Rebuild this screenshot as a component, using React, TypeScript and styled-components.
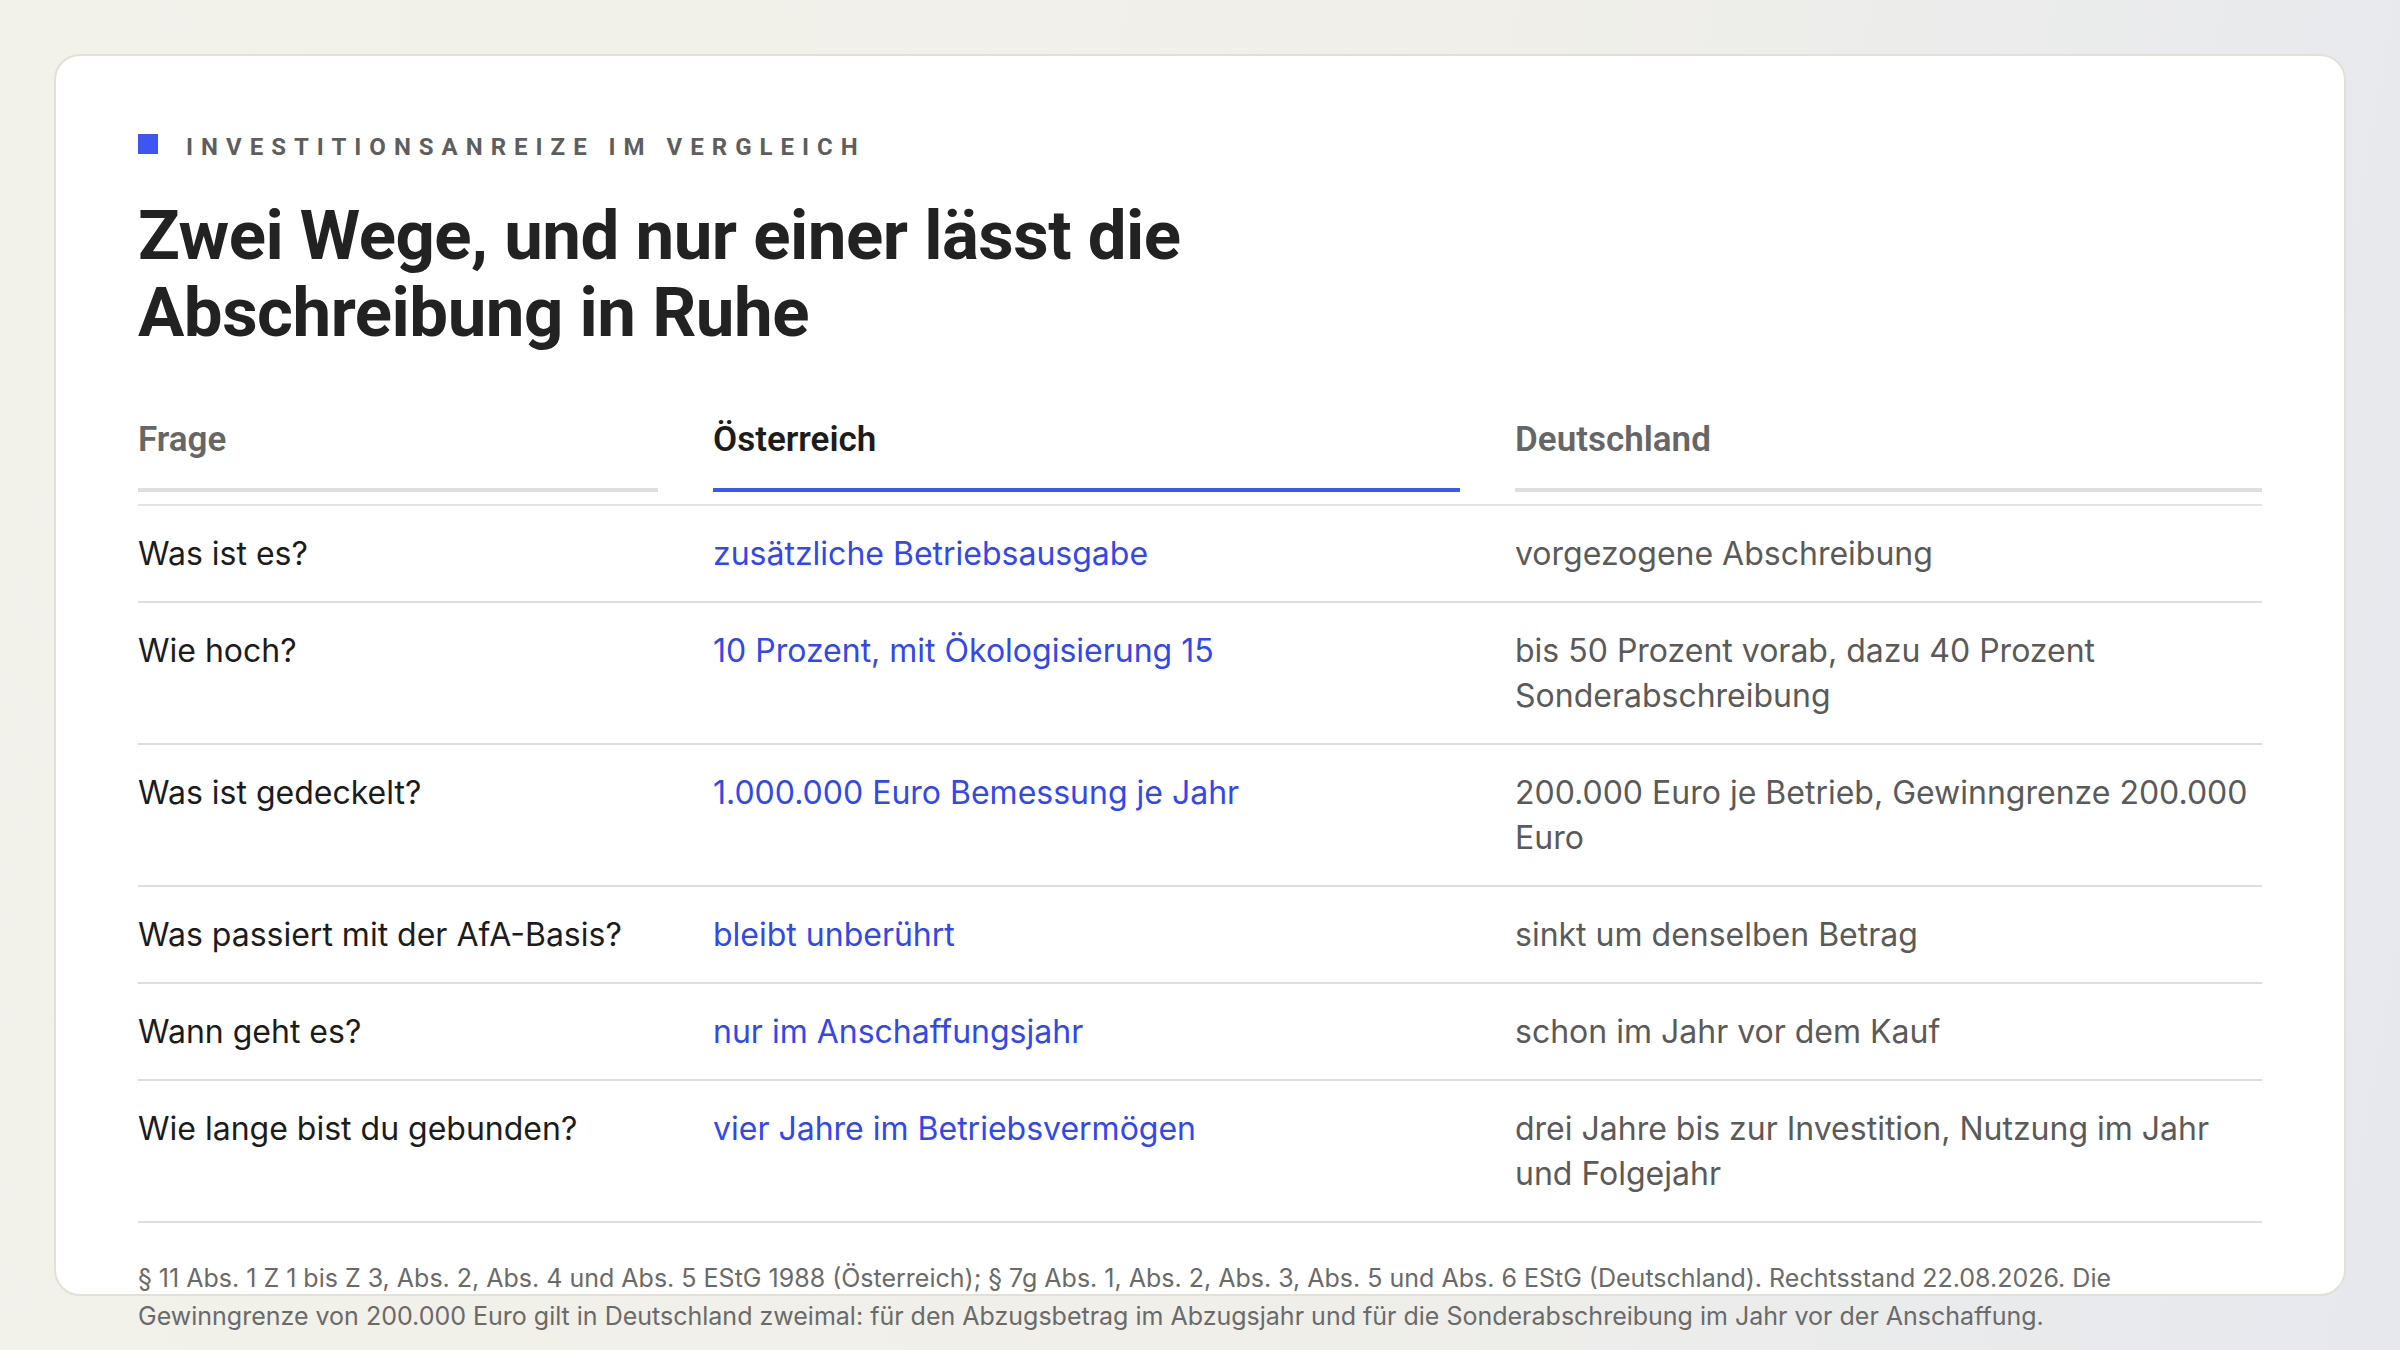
import React from "react";
import styled, { createGlobalStyle } from "styled-components";

const Global = createGlobalStyle`
  html, body { margin: 0; padding: 0; }
  body {
    width: 2400px; height: 1350px; overflow: hidden;
    background: linear-gradient(100deg, #f2f1ea 0%, #f0efe9 55%, #e6e8ee 100%);
    font-family: "Inter", "Noto Sans", sans-serif;
  }
`;

const Page = styled.div`
  padding: 54px;
  box-sizing: border-box;
`;

const Card = styled.div`
  height: 1242px;
  background: #fff;
  border: 2px solid #e3e1d6;
  border-radius: 26px;
  box-sizing: border-box;
  padding: 77px 82px 0 82px;
  overflow: visible;
`;

const Eyebrow = styled.div`
  display: flex;
  align-items: center;
  gap: 28px;
  font-family: "Roboto", sans-serif;
  font-weight: 700;
  font-size: 24px;
  letter-spacing: 8px;
  color: #5e5e5e;
  text-transform: uppercase;
`;

const Square = styled.span`
  width: 20px; height: 20px; background: #3d55f5; display: inline-block;
  margin-top: -6px;
`;

const Title = styled.h1`
  margin: 36px 0 0 0;
  font-family: "Roboto", sans-serif;
  font-weight: 700;
  font-size: 69px;
  line-height: 77px;
  letter-spacing: -0.5px;
  color: #222;
  width: 1250px;
`;

const Table = styled.div`
  margin-top: 68px;
  display: grid;
  grid-template-columns: 520px 747px 747px;
  column-gap: 55px;
  width: 2124px;
`;

const Head = styled.div<{ $active?: boolean }>`
  font-family: "Roboto", sans-serif;
  font-weight: 600;
  font-size: 35px;
  color: ${p => (p.$active ? "#1c1c1c" : "#666")};
  padding-bottom: 28px;
  border-bottom: 4px solid ${p => (p.$active ? "#3d55f5" : "#dedede")};
`;

const HeadRule = styled.div`
  grid-column: 1 / -1;
  height: 2px;
  background: #e4e4e4;
  margin-top: 12px;
`;

const Row = styled.div`
  grid-column: 1 / -1;
  display: grid;
  grid-template-columns: 520px 747px 747px;
  column-gap: 55px;
  padding: 25px 0 25px;
  border-bottom: 2px solid #dedede;
  font-size: 32px;
  line-height: 45px;
`;

const Cell = styled.div<{ $tone: "q" | "at" | "de" }>`
  color: ${p => (p.$tone === "q" ? "#1c1c1c" : p.$tone === "at" ? "#3248ea" : "#5a5a5a")};
`;

const Note = styled.p`
  margin: 36px 0 0 0;
  font-size: 25px;
  line-height: 38px;
  color: #6a6a6a;
  width: 2124px;
`;

const rows: [string, string, string][] = [
  ["Was ist es?", "zusätzliche Betriebsausgabe", "vorgezogene Abschreibung"],
  ["Wie hoch?", "10 Prozent, mit Ökologisierung 15", "bis 50 Prozent vorab, dazu 40 Prozent Sonderabschreibung"],
  ["Was ist gedeckelt?", "1.000.000 Euro Bemessung je Jahr", "200.000 Euro je Betrieb, Gewinngrenze 200.000 Euro"],
  ["Was passiert mit der AfA-Basis?", "bleibt unberührt", "sinkt um denselben Betrag"],
  ["Wann geht es?", "nur im Anschaffungsjahr", "schon im Jahr vor dem Kauf"],
  ["Wie lange bist du gebunden?", "vier Jahre im Betriebsvermögen", "drei Jahre bis zur Investition, Nutzung im Jahr und Folgejahr"],
];

export default function App() {
  return (
    <Page>
      <Global />
      <Card>
        <Eyebrow><Square />Investitionsanreize im Vergleich</Eyebrow>
        <Title>Zwei Wege, und nur einer lässt die Abschreibung in Ruhe</Title>
        <Table>
          <Head>Frage</Head>
          <Head $active>Österreich</Head>
          <Head>Deutschland</Head>
          <HeadRule />
          {rows.map(r => (
            <Row key={r[0]}>
              <Cell $tone="q">{r[0]}</Cell>
              <Cell $tone="at">{r[1]}</Cell>
              <Cell $tone="de">{r[2]}</Cell>
            </Row>
          ))}
        </Table>
        <Note>
          § 11 Abs. 1 Z 1 bis Z 3, Abs. 2, Abs. 4 und Abs. 5 EStG 1988 (Österreich); § 7g Abs. 1, Abs. 2, Abs. 3, Abs. 5 und Abs. 6 EStG (Deutschland). Rechtsstand 22.08.2026. Die Gewinngrenze von 200.000 Euro gilt in Deutschland zweimal: für den Abzugsbetrag im Abzugsjahr und für die Sonderabschreibung im Jahr vor der Anschaffung.
        </Note>
      </Card>
    </Page>
  );
}
